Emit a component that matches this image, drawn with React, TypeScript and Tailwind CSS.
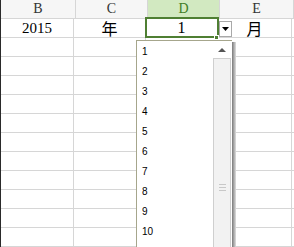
import React from "react";

const cols = [
  { w: "w-[75px]", label: "B" },
  { w: "w-[72px]", label: "C" },
  { w: "w-[72px]", label: "D" },
  { w: "w-[74px]", label: "E" },
];

function Row({ children, cls = "" }: { children?: React.ReactNode; cls?: string }) {
  return <div className={`flex h-[19px] shrink-0 border-b border-[#d6d6d6] ${cls}`}>{children}</div>;
}

export default function App() {
  const empty = Array.from({ length: 12 });
  return (
    <div className="relative w-[294px] h-[247px] overflow-hidden bg-white border-l-[1.5px] border-[#2a2a2a] font-['Liberation_Serif',serif]">
      {/* header */}
      <Row cls="bg-[#f6f6f6]">
        {cols.map((c) => (
          <div
            key={c.label}
            className={`${c.w} shrink-0 border-r border-[#d6d6d6] flex items-center justify-center text-[14px] leading-none ${
              c.label === "D" ? "bg-[#d2e9c1] text-[#3f7d26]" : "text-[#333]"
            }`}
          >
            {c.label}
          </div>
        ))}
        <div className="flex-1" />
      </Row>
      {/* row 1 */}
      <Row>
        <div className="w-[73px] shrink-0 border-r border-[#d6d6d6] flex items-center justify-center text-[15px] text-black">
          2015
        </div>
        <div className="w-[72px] shrink-0 border-r border-[#d6d6d6] flex items-center justify-center text-[16px] text-black font-['Noto_Sans_CJK_SC',sans-serif]">
          年
        </div>
        <div className="w-[72px] shrink-0 border-r border-[#d6d6d6] flex items-center justify-center text-[16px] text-black">
          1
        </div>
        <div className="w-[74px] shrink-0 border-r border-[#d6d6d6] flex items-center justify-center text-[16px] text-black font-['Noto_Sans_CJK_SC',sans-serif]">
          月
        </div>
        <div className="flex-1" />
      </Row>
      {empty.map((_, i) => (
        <Row key={i}>
          <div className="w-[73px] shrink-0 border-r border-[#d6d6d6]" />
          <div className="w-[72px] shrink-0 border-r border-[#d6d6d6]" />
          <div className="w-[72px] shrink-0 border-r border-[#d6d6d6]" />
          <div className="w-[74px] shrink-0 border-r border-[#d6d6d6]" />
          <div className="flex-1" />
        </Row>
      ))}

      {/* selected cell border */}
      <div className="absolute left-[144px] top-[17px] w-[74px] h-[21px] border-2 border-[#4f7f33]" />
      <div className="absolute left-[213px] top-[35px] w-[5px] h-[5px] bg-[#4f7f33] border border-white" />

      {/* dropdown button */}
      <div className="absolute left-[218px] top-[21px] w-[13px] h-[16px] bg-white border border-[#a9a9a9] flex items-center justify-center">
        <svg width="7" height="4" viewBox="0 0 7 4">
          <path d="M0 0 H7 L3.5 4 Z" fill="#000" />
        </svg>
      </div>

      {/* dropdown list */}
      <div className="absolute left-[135px] top-[40px] w-[96px] h-[220px] bg-white border-l border-t border-[#a6a68c] font-['Liberation_Sans',sans-serif]">
        <div className="flex">
          <div className="flex-1 pt-[1px]">
            {["1", "2", "3", "4", "5", "6", "7", "8", "9", "10"].map((n) => (
              <div key={n} className="h-[20px] leading-[20px] pl-[5px] text-[10px] text-black">
                {n}
              </div>
            ))}
          </div>
          <div className="w-[18px] mr-[1px] flex flex-col">
            <div className="h-[17px] flex items-center justify-center">
              <svg width="8" height="4" viewBox="0 0 8 4">
                <path d="M4 0 L8 4 H0 Z" fill="#555" />
              </svg>
            </div>
            <div className="h-[200px] bg-[#f2f2f2] border border-[#cfcfcf] flex flex-col items-center pt-[125px]">
              <div className="flex flex-col gap-[2px]">
                <div className="w-[7px] h-px bg-[#c8c8c8]" />
                <div className="w-[7px] h-px bg-[#c8c8c8]" />
                <div className="w-[7px] h-px bg-[#c8c8c8]" />
              </div>
            </div>
          </div>
        </div>
      </div>
      {/* list shadow */}
      <div className="absolute left-[231px] top-[42px] w-[4px] h-[210px] bg-gradient-to-r from-[#7a7a7a] to-[#e0e0e0]" />
    </div>
  );
}
